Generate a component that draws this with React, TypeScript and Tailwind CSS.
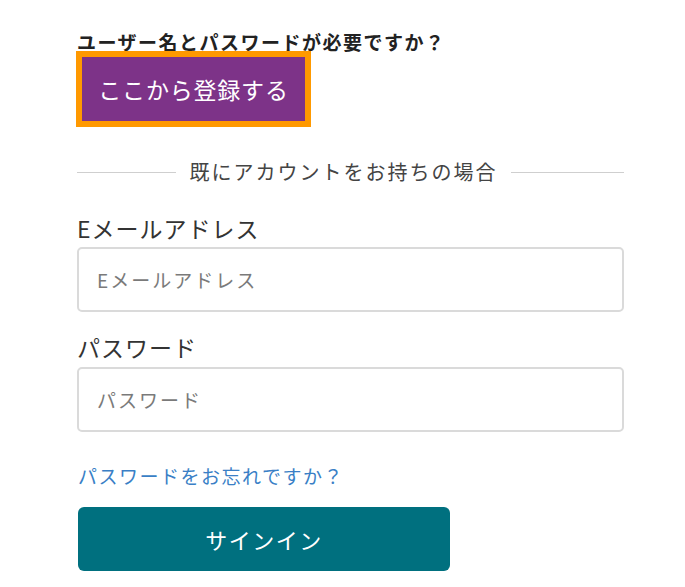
import React from "react";

export default function App() {
  const font = { fontFamily: '"Noto Sans CJK JP", "Noto Sans", sans-serif' };
  return (
    <div className="min-h-[587px] w-[685px] bg-white" style={font}>
      <div className="ml-[77px] w-[547px] pt-[33px] flex flex-col">
        <div className="h-[18px] leading-[18px] text-[19px] tracking-[1.5px] font-bold text-[#222] whitespace-nowrap">
          ユーザー名とパスワードが必要ですか？
        </div>
        <div className="-ml-px">
          <button className="border-[6px] border-[#ff9900] bg-[#7d3388] w-[235px] h-[76px] flex items-center justify-center text-white text-[23px] tracking-[0.8px] leading-none">
            ここから登録する
          </button>
        </div>
        <div className="mt-[30px] h-[30px] flex items-center">
          <div className="w-[99px] h-px bg-[#cfcfcf]" />
          <div className="flex-1 text-center text-[20px] tracking-[2px] text-[#444] leading-[30px] whitespace-nowrap">
            既にアカウントをお持ちの場合
          </div>
          <div className="w-[113px] h-px bg-[#cfcfcf]" />
        </div>
        <label className="mt-[26px] h-[30px] leading-[30px] text-[23px] tracking-[1px] text-[#333]">
          Eメールアドレス
        </label>
        <input
          className="mt-[4px] h-[65px] w-[547px] rounded-[5px] border-2 border-[#dadada] px-[18px] text-[19px] tracking-[2px] text-[#333] placeholder:text-[#7a7a7a] outline-none"
          placeholder="Eメールアドレス"
        />
        <label className="mt-[20px] h-[30px] leading-[30px] text-[23px] tracking-[1px] text-[#333]">
          パスワード
        </label>
        <input
          type="password"
          className="mt-[5px] h-[65px] w-[547px] rounded-[5px] border-2 border-[#dadada] px-[18px] text-[19px] tracking-[2px] text-[#333] placeholder:text-[#7a7a7a] outline-none"
          placeholder="パスワード"
        />
        <a className="ml-px mt-[31px] h-[26px] leading-[26px] text-[19px] tracking-[1.5px] text-[#3a7fc6] whitespace-nowrap cursor-pointer">
          パスワードをお忘れですか？
        </a>
        <button className="ml-px mt-[18px] w-[372px] h-[64px] rounded-[6px] bg-[#00707f] text-white text-[22px] tracking-[1.5px] flex items-center justify-center">
          サインイン
        </button>
      </div>
    </div>
  );
}
